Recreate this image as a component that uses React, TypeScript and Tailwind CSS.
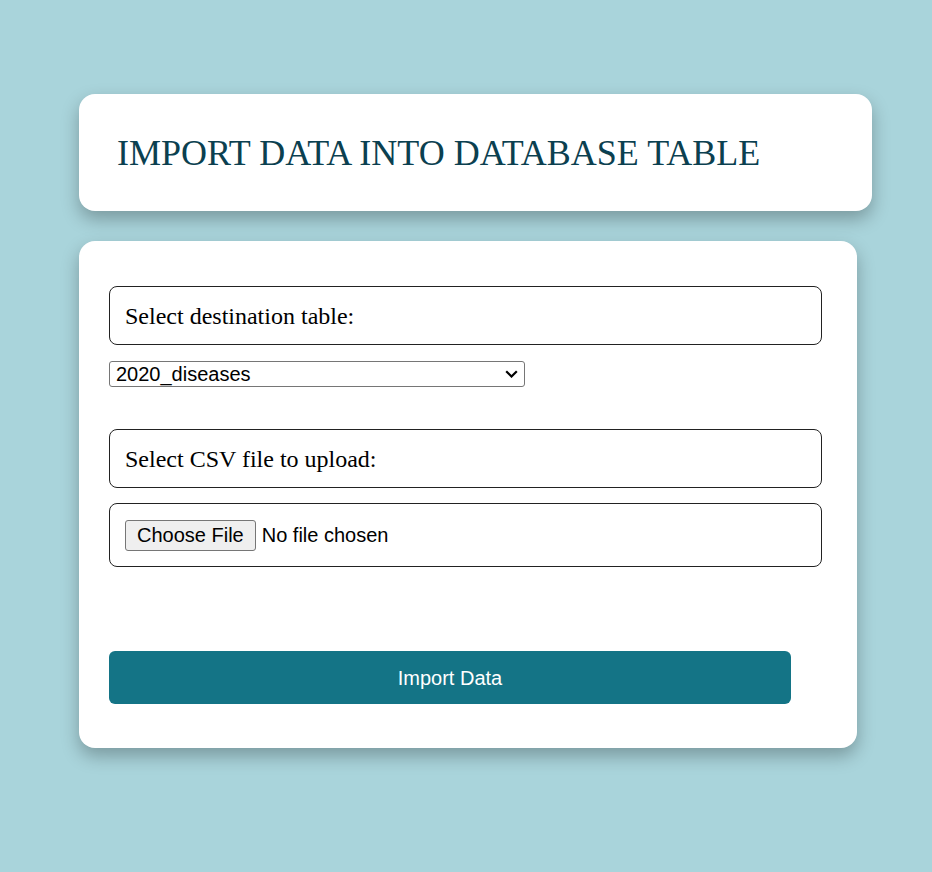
import React, { useState } from 'react';

const tables = ['2020_diseases', '2021_diseases', '2022_diseases'];

const App: React.FC = () => {
  const [table, setTable] = useState(tables[0]);

  return (
    <div className="min-h-screen w-full bg-[#a9d4db] pt-[94px] pl-[79px] pb-[120px]">
      {/* header card */}
      <div className="w-[793px] h-[117px] bg-white rounded-[16px] shadow-[0_8px_18px_rgba(0,0,0,0.28)] flex items-center pl-[38px]">
        <h1 className="font-['Liberation_Serif',serif] text-[36px] leading-none text-[#0b4050]">
          IMPORT DATA INTO DATABASE TABLE
        </h1>
      </div>

      {/* form card */}
      <form
        onSubmit={(e) => e.preventDefault()}
        className="mt-[30px] w-[778px] bg-white rounded-[16px] shadow-[0_8px_18px_rgba(0,0,0,0.28)] pl-[30px] pt-[45px] pb-[44px] flex flex-col"
      >
        <div className="w-[713px] h-[59px] border border-[#222] rounded-[8px] flex items-center pl-[15px]">
          <span className="font-['Liberation_Serif',serif] text-[24px] text-black">Select destination table:</span>
        </div>

        <div className="relative mt-[16px] w-[416px] h-[26px]">
          <select
            value={table}
            onChange={(e) => setTable(e.target.value)}
            className="appearance-none w-full h-full border border-[#767676] rounded-[3px] pl-[6px] font-['Liberation_Sans',Arial,sans-serif] text-[20px] leading-[23px] text-black bg-white"
          >
            {tables.map((t) => (
              <option key={t} value={t}>{t}</option>
            ))}
          </select>
          <svg
            className="pointer-events-none absolute right-[7px] top-[9px]"
            width="13"
            height="8"
            viewBox="0 0 13 8"
            fill="none"
          >
            <path d="M1.2 1.2 L6.5 6.5 L11.8 1.2" stroke="#000" strokeWidth="2.2" />
          </svg>
        </div>

        <div className="mt-[42px] w-[713px] h-[59px] border border-[#222] rounded-[8px] flex items-center pl-[15px]">
          <span className="font-['Liberation_Serif',serif] text-[24px] text-black">Select CSV file to upload:</span>
        </div>

        <div className="mt-[15px] w-[713px] h-[64px] border border-[#222] rounded-[8px] flex items-center pl-[15px]">
          <input
            type="file"
            accept=".csv"
            className="font-['Liberation_Sans',Arial,sans-serif] text-[20px] text-black file:bg-[#efefef] file:border file:border-[#767676] file:rounded-[3px] file:px-[11px] file:py-[3px] file:mr-[6px] file:leading-[23px] file:text-black"
          />
        </div>

        <button
          type="submit"
          className="mt-[84px] w-[682px] h-[53px] bg-[#147486] rounded-[6px] text-white font-['Liberation_Sans',Arial,sans-serif] text-[20px]"
        >
          Import Data
        </button>
      </form>
    </div>
  );
};

export default App;
